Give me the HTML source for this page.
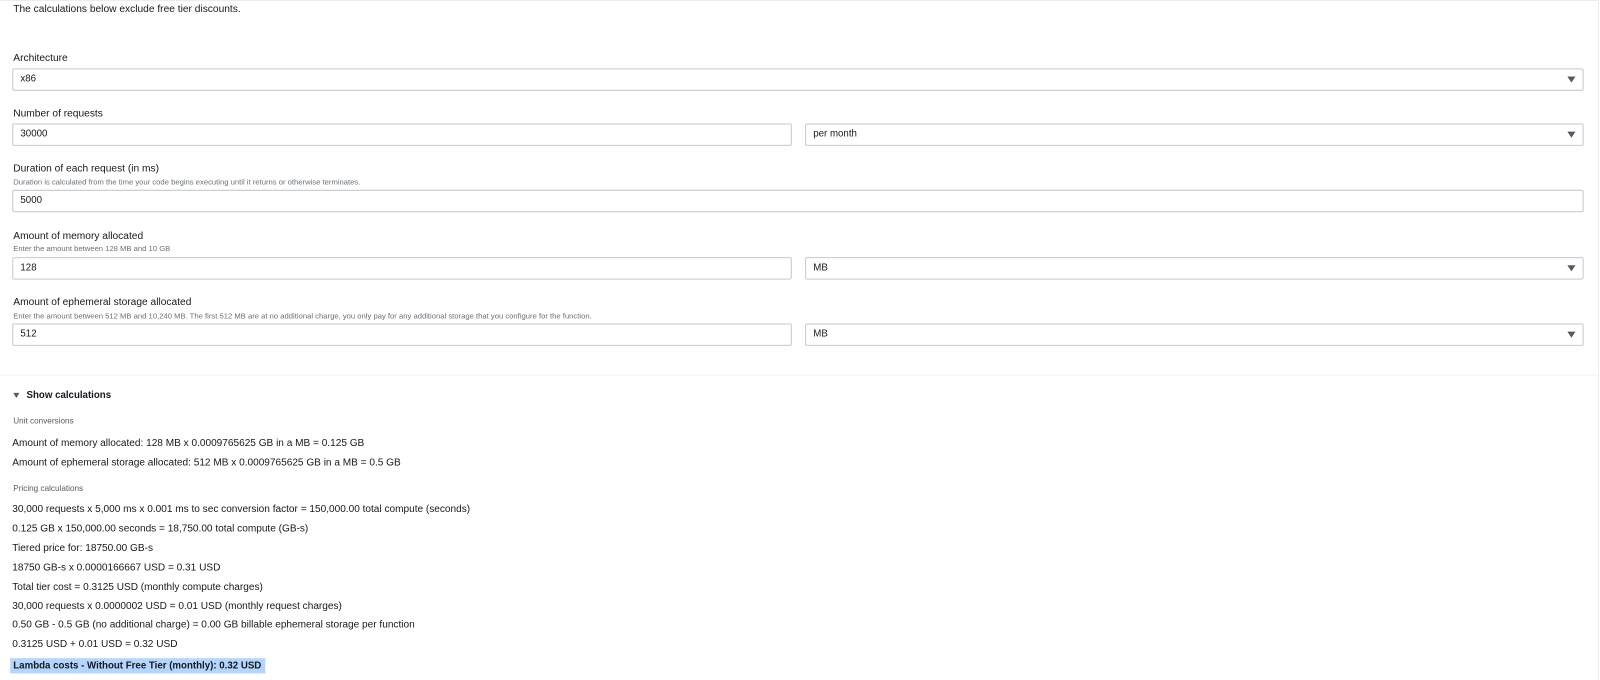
<!DOCTYPE html>
<html><head><meta charset="utf-8"><style>
*{margin:0;padding:0;box-sizing:border-box}
html,body{width:1600px;height:680px;overflow:hidden;background:#fff}
body{font-family:"Liberation Sans",Arial,sans-serif;color:#16191f;position:relative}
#w{position:absolute;left:0;top:0;width:1568px;height:667px;transform:scale(1.0204);transform-origin:0 0}
.a{position:absolute;white-space:nowrap}
.t{font-size:10px}
.lab{font-size:10px}
.help{font-size:7.5px;color:#687078}
.box{position:absolute;border:1px solid #c6c9cc;border-radius:2px;height:22px;font-size:9.5px;padding-left:7px;line-height:20px;background:#fff}
.arr{position:absolute;right:7px;top:7px;width:0;height:0;border-left:4px solid transparent;border-right:4px solid transparent;border-top:6px solid #545b64}
.c{font-size:9.9px}
.s{font-size:8px;color:#545b64}
</style></head><body><div id="w">
<div class="a" style="left:0;top:0;width:1567px;height:1px;background:#eaeded"></div>
<div class="a" style="left:1566px;top:0;width:1px;height:680px;background:#eaeded"></div>
<div class="a t" style="left:13px;top:4px">The calculations below exclude free tier discounts.</div>

<div class="a lab" style="left:13px;top:52px">Architecture</div>
<div class="box" style="left:12px;top:67px;width:1540px">x86<div class="arr"></div></div>

<div class="a lab" style="left:13px;top:106px">Number of requests</div>
<div class="box" style="left:12px;top:121px;width:764px">30000</div>
<div class="box" style="left:789px;top:121px;width:763px">per month<div class="arr"></div></div>

<div class="a lab" style="left:13px;top:160px">Duration of each request (in ms)</div>
<div class="a help" style="left:13px;top:174px">Duration is calculated from the time your code begins executing until it returns or otherwise terminates.</div>
<div class="box" style="left:12px;top:186px;width:1540px">5000</div>

<div class="a lab" style="left:13px;top:226px">Amount of memory allocated</div>
<div class="a help" style="left:13px;top:239px">Enter the amount between 128 MB and 10 GB</div>
<div class="box" style="left:12px;top:252px;width:764px">128</div>
<div class="box" style="left:789px;top:252px;width:763px">MB<div class="arr"></div></div>

<div class="a lab" style="left:13px;top:291px">Amount of ephemeral storage allocated</div>
<div class="a help" style="left:13px;top:305px">Enter the amount between 512 MB and 10,240 MB. The first 512 MB are at no additional charge, you only pay for any additional storage that you configure for the function.</div>
<div class="box" style="left:12px;top:317px;width:764px">512</div>
<div class="box" style="left:789px;top:317px;width:763px">MB<div class="arr"></div></div>

<div class="a" style="left:0;top:367px;width:1566px;height:1px;background:#f0f1f1"></div>
<div class="a" style="left:13px;top:385px;width:0;height:0;border-left:3.5px solid transparent;border-right:3.5px solid transparent;border-top:5px solid #545b64"></div>
<div class="a" style="left:26px;top:382px;font-size:9.5px;font-weight:bold;color:#16191f">Show calculations</div>
<div class="a s" style="left:13px;top:408px">Unit conversions</div>
<div class="a c" style="left:12px;top:429px">Amount of memory allocated: 128 MB x 0.0009765625 GB in a MB = 0.125 GB</div>
<div class="a c" style="left:12px;top:448px">Amount of ephemeral storage allocated: 512 MB x 0.0009765625 GB in a MB = 0.5 GB</div>
<div class="a s" style="left:13px;top:474px">Pricing calculations</div>
<div class="a c" style="left:12px;top:494px">30,000 requests x 5,000 ms x 0.001 ms to sec conversion factor = 150,000.00 total compute (seconds)</div>
<div class="a c" style="left:12px;top:513px">0.125 GB x 150,000.00 seconds = 18,750.00 total compute (GB-s)</div>
<div class="a c" style="left:12px;top:532px">Tiered price for: 18750.00 GB-s</div>
<div class="a c" style="left:12px;top:551px">18750 GB-s x 0.0000166667 USD = 0.31 USD</div>
<div class="a c" style="left:12px;top:570px">Total tier cost = 0.3125 USD (monthly compute charges)</div>
<div class="a c" style="left:12px;top:589px">30,000 requests x 0.0000002 USD = 0.01 USD (monthly request charges)</div>
<div class="a c" style="left:12px;top:607px">0.50 GB - 0.5 GB (no additional charge) = 0.00 GB billable ephemeral storage per function</div>
<div class="a c" style="left:12px;top:626px">0.3125 USD + 0.01 USD = 0.32 USD</div>
<div class="a" style="left:10px;top:645px;width:250px;height:15px;background:#b4d5fe"></div>
<div class="a" style="left:13px;top:647px;font-size:9.5px;font-weight:bold">Lambda costs - Without Free Tier (monthly): 0.32 USD</div>
</div></body></html>
